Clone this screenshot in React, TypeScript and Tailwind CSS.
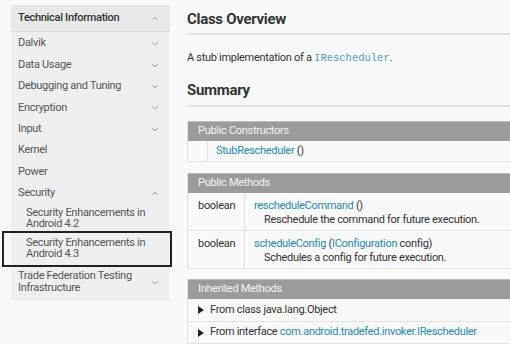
import React from "react";

const navItems = [
  { label: "Dalvik", chevron: "down" },
  { label: "Data Usage", chevron: "down" },
  { label: "Debugging and Tuning", chevron: "down" },
  { label: "Encryption", chevron: "down" },
  { label: "Input", chevron: "down" },
  { label: "Kernel" },
  { label: "Power" },
  { label: "Security", chevron: "up" },
];

function Chevron({ dir }: { dir: string }) {
  return (
    <svg width="8" height="5" viewBox="0 0 8 5" className="shrink-0">
      <polyline
        points={dir === "up" ? "1,4 4,1 7,4" : "1,1 4,4 7,1"}
        fill="none"
        stroke="#a8a8a8"
        strokeWidth="1"
      />
    </svg>
  );
}

function Triangle() {
  return (
    <svg width="6" height="8" viewBox="0 0 6 8" className="shrink-0">
      <polygon points="0,0 6,4 0,8" fill="#222" />
    </svg>
  );
}

function Sidebar() {
  return (
    <aside className="ml-[11px] mt-[5px] w-[159px] shrink-0 self-start bg-[#efefef] text-[11px] tracking-[-0.3px] text-[#555]">
      <div className="h-[27px] flex items-center justify-between pl-[7px] pr-[11px] bg-[#e8e8e8] border-b border-[#dcdcdc] font-medium text-[#333]">
        <span>Technical Information</span>
        <Chevron dir="up" />
      </div>
      <div className="pt-[1px]">
        {navItems.map(item => (
          <div key={item.label} className="h-[21.4px] flex items-center justify-between pl-[7px] pr-[11px]">
            <span>{item.label}</span>
            {item.chevron && <Chevron dir={item.chevron} />}
          </div>
        ))}
      </div>
      <div className="pl-[15px] pr-[11px] pt-[3px] pb-[1.5px] leading-[11px]">
        Security Enhancements in
        <br />
        Android 4.2
      </div>
      <div className="relative pl-[15px] pr-[11px] pt-[6.5px] pb-[8px] leading-[11px]">
        Security Enhancements in
        <br />
        Android 4.3
        <div className="absolute -left-[9px] -right-[2px] top-0 bottom-0 border-2 border-[#222]" />
      </div>
      <div className="flex items-center justify-between pl-[7px] pr-[11px] pt-[3px] pb-[7px] leading-[12px]">
        <span>
          Trade Federation Testing
          <br />
          Infrastructure
        </span>
        <Chevron dir="down" />
      </div>
    </aside>
  );
}

function TableHeader({ title }: { title: string }) {
  return (
    <div className="h-[20px] flex items-center pl-[10px] bg-[#9b9b9b] text-[#f4f4f4] border-t border-[#bdbdbd]">
      {title}
    </div>
  );
}

const link = "text-[#258aaf]";

export default function App() {
  return (
    <div
      className="w-[510px] h-[344px] overflow-hidden bg-[#f9f9f9] flex text-[#333]"
      style={{ fontFamily: "Roboto, 'Noto Sans', sans-serif" }}
    >
      <Sidebar />

      <main className="ml-[17px] w-[340px] shrink-0 text-[11px] tracking-[-0.3px]">
        <h1 className="mt-[9px] text-[15px] font-bold leading-[20px] text-[#333]">Class Overview</h1>
        <div className="mt-[4px] h-[2px] bg-[#e4e4e4]" />
        <p className="mt-[16px] leading-[14px]">
          A stub implementation of a{" "}
          <span className="text-[#4a9fc2] text-[10.5px] tracking-normal" style={{ fontFamily: "'Liberation Mono', monospace" }}>
            IRescheduler
          </span>
          .
        </p>
        <h2 className="mt-[15px] text-[15px] font-bold leading-[20px]">Summary</h2>
        <div className="mt-[5px] h-[2px] bg-[#e4e4e4]" />

        <section className="mt-[14px] border-x border-b border-[#e2e2e2]">
          <TableHeader title="Public Constructors" />
          <div className="h-[20px] flex">
            <div className="w-[20px] border-r border-[#e2e2e2]" />
            <div className="pl-[8px] flex items-center">
              <span className={link}>StubRescheduler</span>&nbsp;()
            </div>
          </div>
        </section>

        <section className="mt-[11px] border-x border-b border-[#e2e2e2]">
          <TableHeader title="Public Methods" />
          {[
            { name: "rescheduleCommand", args: null, desc: "Reschedule the command for future execution." },
            { name: "scheduleConfig", args: true, desc: "Schedules a config for future execution." },
          ].map((m, i) => (
            <div key={m.name} className={`flex leading-[14px] ${i > 0 ? "border-t border-[#e2e2e2]" : ""}`}>
              <div className="w-[57px] pl-[10px] pt-[6px] pb-[3px] border-r border-[#e2e2e2]">boolean</div>
              <div className="pl-[9px] pt-[6px] pb-[3px]">
                <div>
                  <span className={link}>{m.name}</span>
                  {m.args ? (
                    <>
                      {" "}(<span className={link}>IConfiguration</span> config)
                    </>
                  ) : (
                    " ()"
                  )}
                </div>
                <div className="pl-[10px]">{m.desc}</div>
              </div>
            </div>
          ))}
        </section>

        <section className="mt-[10px] border-x border-b border-[#e2e2e2]">
          <TableHeader title="Inherited Methods" />
          <div className="h-[22px] flex items-center gap-[6px] pl-[10px]">
            <Triangle />
            <span>From class java.lang.Object</span>
          </div>
          <div className="h-[22px] flex items-center gap-[6px] pl-[10px] border-t border-[#e2e2e2]">
            <Triangle />
            <span>
              From interface <span className={link}>com.android.tradefed.invoker.IRescheduler</span>
            </span>
          </div>
        </section>
      </main>
    </div>
  );
}
